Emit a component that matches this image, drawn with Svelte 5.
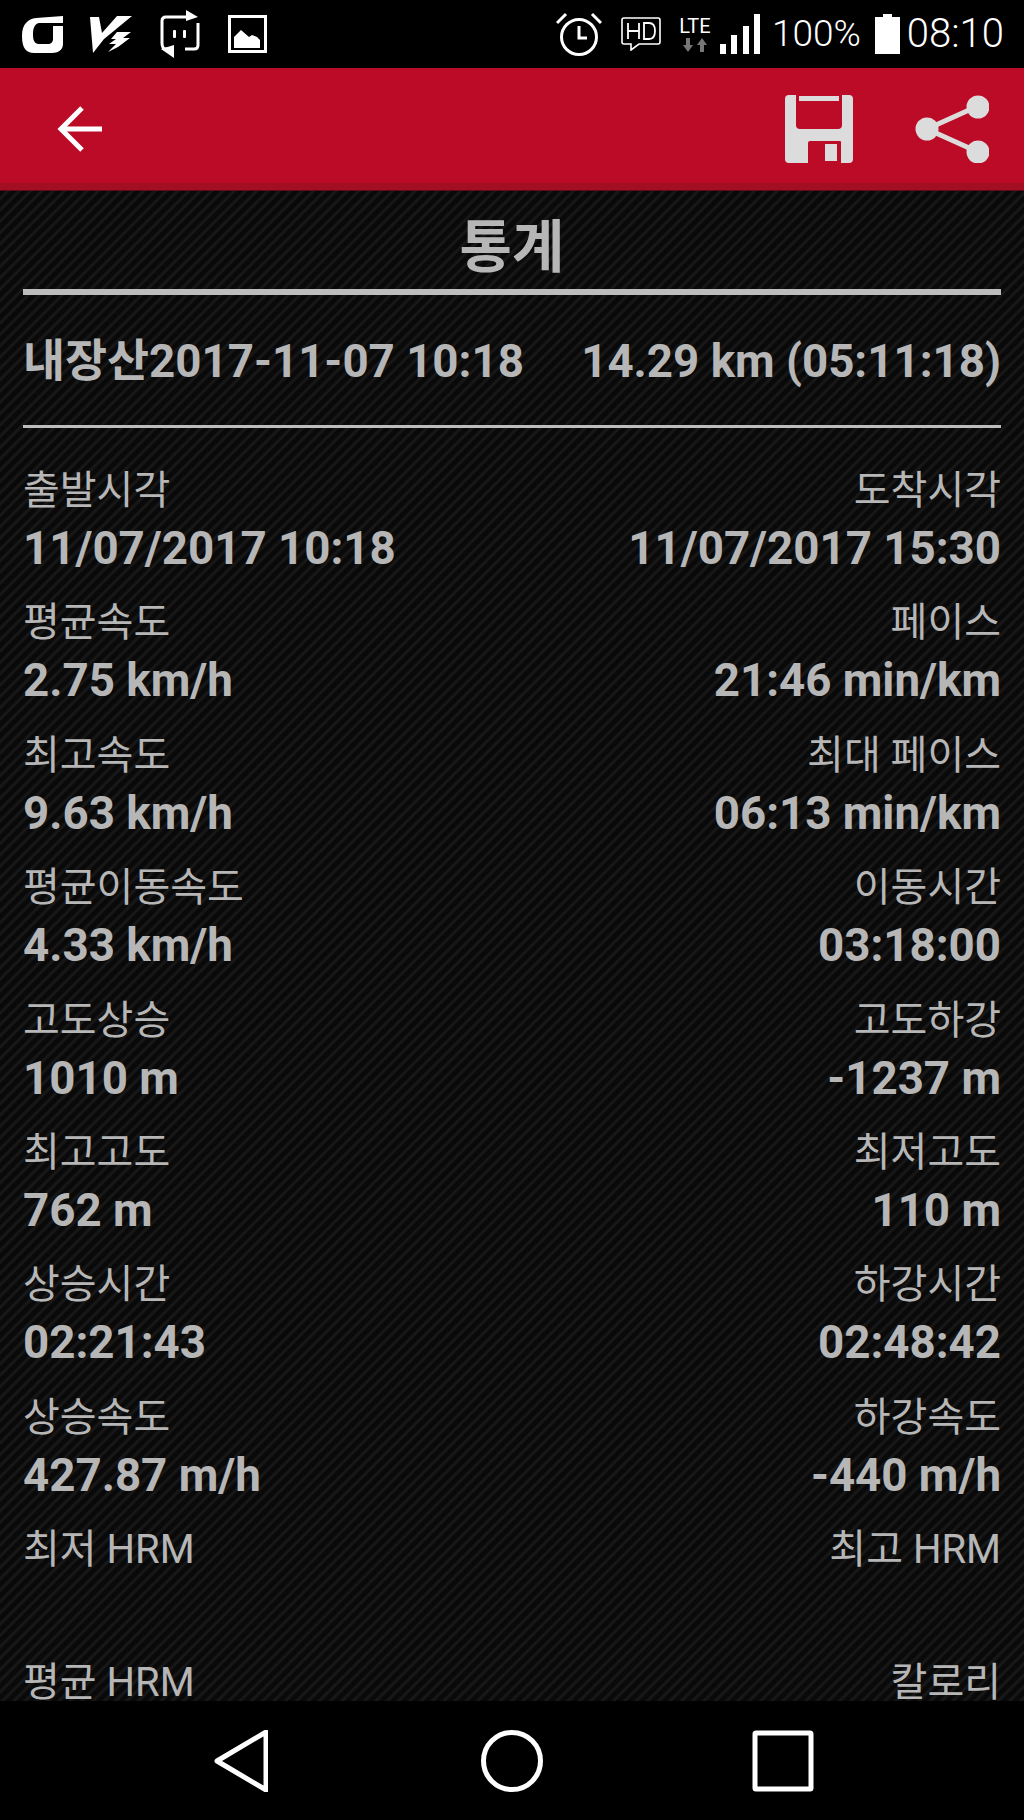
<script>
  const stats = [
    ["출발시각", "11/07/2017 10:18", "도착시각", "11/07/2017 15:30"],
    ["평균속도", "2.75 km/h", "페이스", "21:46 min/km"],
    ["최고속도", "9.63 km/h", "최대 페이스", "06:13 min/km"],
    ["평균이동속도", "4.33 km/h", "이동시간", "03:18:00"],
    ["고도상승", "1010 m", "고도하강", "-1237 m"],
    ["최고고도", "762 m", "최저고도", "110 m"],
    ["상승시간", "02:21:43", "하강시간", "02:48:42"],
    ["상승속도", "427.87 m/h", "하강속도", "-440 m/h"],
    ["최저 HRM", "", "최고 HRM", ""],
    ["평균 HRM", "", "칼로리", ""],
  ];
</script>

<div class="screen">
  <div class="statusbar">
    <svg class="st-g" viewBox="0 0 41 37" width="41" height="37">
      <path fill="#fff" d="M41 0 V7 H17 C12 8 11 13 11 19 C11 25 13 28 17 28 H26 C29 28 31 26 31 23 V10 H41 V28 C41 34 36 37 30 37 H12 C4 37 0 32 0 20 C0 8 6 3 14 2 Z" />
    </svg>
    <svg class="st-v" viewBox="0 0 42 38" width="42" height="38">
      <path fill="#fff" d="M0 2 H9 L12 18 L27 1 H42 L25 15 L14 24 L3 38 Z" />
      <path fill="#fff" d="M27 17 H41 L33 23 H40 L28 32 L18 37 L26 29 H19 L26 24 H21 Z" />
    </svg>
    <svg class="st-r" viewBox="0 0 40 48" width="40" height="48">
      <path fill="none" stroke="#fff" stroke-width="3" d="M26 7 H6 Q2 7 2 11 V33 Q2 39 6 39 H14 M25 39 H34 Q38 39 38 35 V13" />
      <path fill="#fff" d="M26 0 L38 7 L26 11 Z M14 35 L1 39 L14 48 Z" />
      <rect x="13" y="20" width="3" height="8" rx="1" fill="#fff" />
      <rect x="23" y="20" width="3" height="8" rx="1" fill="#fff" />
    </svg>
    <svg class="st-i" viewBox="0 0 39 38" width="39" height="38">
      <path fill-rule="evenodd" fill="#fff" d="M0 0 H39 V38 H0 Z M3 3 V35 H36 V3 Z" />
      <path fill="#fff" d="M6 33 V22 L13 15 L21 22 L24 20 L29 22 L32 25 V33 Z" />
    </svg>

    <span class="st-space"></span>

    <svg class="st-alarm" viewBox="0 0 46 44" width="46" height="44">
      <circle cx="23" cy="25" r="17.5" fill="none" stroke="#fff" stroke-width="3" />
      <path d="M23 14 V26 H31" fill="none" stroke="#fff" stroke-width="3" />
      <path d="M1 11 L10 2 M45 11 L36 2" fill="none" stroke="#fff" stroke-width="3" />
    </svg>
    <svg class="st-hd" viewBox="0 0 40 34" width="40" height="34">
      <path d="M3 1 H37 Q39 1 39 3 V25 Q39 27 37 27 H18 L10 33 V27 H3 Q1 27 1 25 V3 Q1 1 3 1 Z" fill="none" stroke="#fff" stroke-width="1.6" />
      <path d="M7 6 V22 M18 6 V22 M7 14 H18 M23 6 V22 H28 Q34 22 34 14 Q34 6 28 6 Z" fill="none" stroke="#fff" stroke-width="1.8" />
    </svg>
    <div class="st-lte">
      <span>LTE</span>
      <svg viewBox="0 0 24 14" width="24" height="14">
        <path fill="#777" d="M3 0 H7 V7 H10 L5 14 L0 7 H3 Z M17 14 H21 V7 H24 L19 0 L14 7 H17 Z" />
      </svg>
    </div>
    <svg class="st-sig" viewBox="0 0 40 40" width="40" height="40">
      <path fill="#fff" d="M0 30 H6 V40 H0 Z M11 21 H17 V40 H11 Z M23 12 H29 V40 H23 Z M34 0 H40 V40 H34 Z" />
    </svg>
    <span class="st-text pct">100%</span>
    <svg class="st-bat" viewBox="0 0 25 40" width="25" height="40">
      <path fill="#fff" d="M8 0 H17 V3 H25 V40 H0 V3 H8 Z" />
    </svg>
    <span class="st-text clock">08:10</span>
  </div>

  <header class="toolbar">
    <svg viewBox="0 0 46 46" width="46" height="46">
      <path d="M45 23 H4 M25 2 L4 23 L25 44" fill="none" stroke="#fff" stroke-width="5" />
    </svg>
    <span class="grow"></span>
    <svg class="save" viewBox="0 0 68 68" width="68" height="68">
      <path fill-rule="evenodd" fill="#dcdcdc" d="M4 0 H64 Q68 0 68 4 V64 Q68 68 64 68 H56 V47 Q56 46 55 46 H25 Q23 46 23 48 V68 H4 Q0 68 0 64 V4 Q0 0 4 0 Z M11 0 V30 Q11 34 15 34 H53 Q57 34 57 30 V0 Z" />
      <rect x="14" y="1" width="40" height="5" fill="#dcdcdc" />
      <rect x="40" y="49" width="12" height="17" fill="#dcdcdc" />
    </svg>
    <svg viewBox="0 0 74 68" width="74" height="68">
      <path d="M12 34 L63 11 M12 34 L63 57" stroke="#dcdcdc" stroke-width="5" fill="none" />
      <circle cx="12" cy="34" r="11.5" fill="#dcdcdc" />
      <circle cx="63" cy="12" r="11.5" fill="#dcdcdc" />
      <circle cx="63" cy="57" r="11.5" fill="#dcdcdc" />
    </svg>
  </header>

  <main class="content">
    <h1>통계</h1>
    <div class="summary">
      <span>내장산2017-11-07 10:18</span>
      <span>14.29 km (05:11:18)</span>
    </div>
    <div class="stats">
      {#each stats as s}
        <div class="row">
          <div class="cell">
            <div class="label">{s[0]}</div>
            <div class="value">{s[1]}</div>
          </div>
          <div class="cell right">
            <div class="label">{s[2]}</div>
            <div class="value">{s[3]}</div>
          </div>
        </div>
      {/each}
    </div>
  </main>

  <nav class="navbar">
    <svg viewBox="0 0 54 62" width="54" height="62">
      <path d="M3 31 L52 2 V60 Z" fill="none" stroke="#fff" stroke-width="5" stroke-linejoin="round" />
    </svg>
    <svg class="home" viewBox="0 0 62 62" width="62" height="62">
      <circle cx="31" cy="31" r="28.5" fill="none" stroke="#fff" stroke-width="5" />
    </svg>
    <svg viewBox="0 0 62 62" width="62" height="62">
      <rect x="3" y="3" width="56" height="56" rx="1" fill="none" stroke="#fff" stroke-width="5" />
    </svg>
  </nav>
</div>

<style>
  :global(body) {
    margin: 0;
    background: #000;
  }

  .screen {
    width: 1024px;
    height: 1820px;
    display: flex;
    flex-direction: column;
    overflow: hidden;
    font-family: Roboto, "Noto Sans CJK KR", sans-serif;
  }

  .statusbar {
    height: 68px;
    flex: none;
    background: #000;
    display: flex;
    align-items: center;
    padding-left: 22px;
    padding-right: 20px;
    color: #fff;
  }
  .st-g { margin-right: 27px; }
  .st-v { margin-right: 28px; }
  .st-r { margin-right: 28px; margin-top: -1px; }
  .st-space { flex: 1; }
  .st-alarm { margin-right: 19px; margin-top: -1px; }
  .st-hd { margin-right: 18px; }
  .st-lte {
    width: 32px;
    display: flex;
    flex-direction: column;
    align-items: center;
    margin-right: 9px;
    font-size: 20px;
    line-height: 18px;
    gap: 3px;
  }
  .st-lte svg { display: block; }
  .st-text {
    font-weight: 300;
    line-height: 40px;
  }
  .pct { font-size: 37px; margin-left: 12px; margin-right: 14px; }
  .clock { font-size: 40px; margin-left: 7px; }

  .toolbar {
    height: 123px;
    flex: none;
    box-sizing: border-box;
    background: linear-gradient(#bc0b27 115px, #a30f22 115px, #a30f22 122px, #5e0a18 122px);
    padding: 0 35px 0 57px;
    display: flex;
    align-items: center;
  }
  .toolbar svg { margin-top: -2px; }
  .grow { flex: 1; }
  .save { margin-right: 62px; }

  .content {
    flex: 1;
    min-height: 0;
    overflow: hidden;
    box-sizing: border-box;
    padding: 0 23px;
    color: #b6b6b6;
    background-color: #0b0b0b;
    background-image: repeating-linear-gradient(
      135deg,
      #090909 0,
      #090909 3px,
      #181818 5px,
      #181818 6px,
      #090909 8px
    );
  }

  h1 {
    margin: 0;
    height: 104px;
    box-sizing: border-box;
    padding-top: 15px;
    border-bottom: 6px solid #bdbdbd;
    font-size: 57px;
    line-height: 84px;
    font-weight: 700;
    text-align: center;
  }

  .summary {
    height: 133px;
    box-sizing: border-box;
    padding-top: 37px;
    border-bottom: 3px solid #bdbdbd;
    display: flex;
    justify-content: space-between;
    align-items: baseline;
    font-size: 45.7px;
    line-height: 60px;
    font-weight: 700;
    white-space: nowrap;
  }

  .stats { padding-top: 30px; }

  .row {
    display: flex;
    justify-content: space-between;
    height: 132.4px;
  }
  .cell { white-space: nowrap; }
  .right { text-align: right; }

  .label {
    font-size: 40px;
    line-height: 66px;
    height: 66px;
  }
  .value {
    font-size: 45.7px;
    font-weight: 700;
    line-height: 49px;
    height: 49px;
  }

  .navbar {
    height: 119px;
    flex: none;
    background: #000;
    display: flex;
    align-items: center;
    padding-left: 214px;
  }
  .home { margin: 0 209px 0 213px; }
</style>
